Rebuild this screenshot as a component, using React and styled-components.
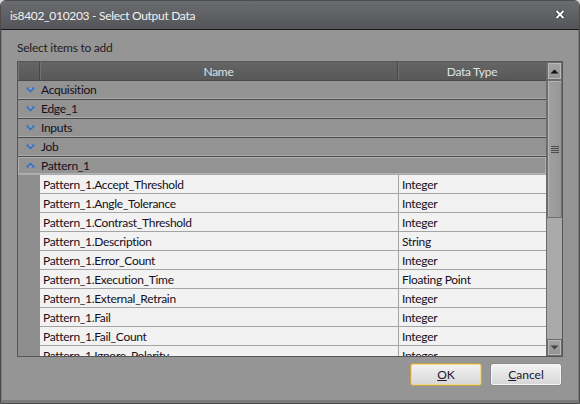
import React from 'react'
import styled, { createGlobalStyle } from 'styled-components'

const GlobalStyle = createGlobalStyle`
  html, body {
    margin: 0;
    background: #d8d8d8;
  }
  body {
    font-family: 'Segoe UI', Lato, 'Open Sans', sans-serif;
  }
`

const Window = styled.div`
  width: 580px;
  height: 404px;
  box-sizing: border-box;
  display: flex;
  flex-direction: column;
  border: 1px solid #4c4c4c;
  border-radius: 6px 6px 0 0;
  overflow: hidden;
  background: #959595;
`

const TitleBar = styled.div`
  height: 28px;
  flex: none;
  display: flex;
  align-items: center;
  justify-content: space-between;
  padding: 0 14px 0 9px;
  background: linear-gradient(#6b6c6f, #545558);
  border-bottom: 1px solid #1a1a1a;
  color: #f2f2f2;
  font-size: 12px;
  letter-spacing: -0.3px;
`

const CloseButton = styled.div`
  display: flex;
  align-items: center;
  margin-top: -1px;
`

const Body = styled.div`
  flex: 1;
  display: flex;
  flex-direction: column;
  padding: 10px 15px 0 15px;
  border-left: 1px solid #7a7a7a;
  border-right: 1px solid #7a7a7a;
  border-bottom: 3px solid #7a7a7a;
`

const Label = styled.div`
  font-size: 12px;
  letter-spacing: -0.25px;
  line-height: 15px;
  height: 15px;
  color: #1e1e1e;
  margin-bottom: 6px;
`

const Table = styled.div`
  width: 546px;
  height: 296px;
  box-sizing: border-box;
  border: 1px solid #565656;
  display: grid;
  grid-template-columns: 1fr 16px;
  background: #8e8e8e;
`

const Content = styled.div`
  overflow: hidden;
  display: flex;
  flex-direction: column;
  font-size: 12px;
  letter-spacing: -0.3px;
`

const HeaderRow = styled.div`
  height: 18px;
  flex: none;
  display: grid;
  grid-template-columns: 22px 358px 1fr;
  background: linear-gradient(#656565, #585858);
  color: #dfe3e6;
`

const HeaderCell = styled.div`
  display: flex;
  align-items: center;
  justify-content: center;
  border-right: 1px solid #474747;
  box-shadow: inset 1px 0 0 #727272;
  &:last-child {
    border-right: none;
  }
`

const GroupRow = styled.div`
  height: 19px;
  flex: none;
  box-sizing: border-box;
  display: flex;
  align-items: center;
  border-top: 1px solid #4a4a4a;
  border-bottom: 1px solid #aaaaaa;
  background: #939393;
  color: #160f1c;
  box-shadow: ${p => (p.$active ? 'inset 0 0 0 1px #b2b2b2' : 'none')};
`

const Chevron = styled.div`
  width: 22px;
  display: flex;
  align-items: center;
  justify-content: center;
  padding-left: 1px;
`

const DataRow = styled.div`
  height: 19px;
  flex: none;
  display: grid;
  grid-template-columns: 22px 358px 1fr;
  color: #160f1c;
`

const Indent = styled.div`
  background: #8e8e8e;
`

const Cell = styled.div`
  box-sizing: border-box;
  background: #f2f2f2;
  border-bottom: 1px solid #a4a4a4;
  border-left: ${p => (p.$divider ? '1px solid #a4a4a4' : 'none')};
  padding-left: 3px;
  display: flex;
  align-items: center;
  white-space: nowrap;
`

const ScrollBar = styled.div`
  display: flex;
  flex-direction: column;
  background: #aaaaaa;
  border-left: 1px solid #6a6a6a;
`

const ScrollButton = styled.div`
  height: ${p => p.$h}px;
  flex: none;
  box-sizing: border-box;
  display: flex;
  align-items: center;
  justify-content: center;
  background: linear-gradient(#a4a4a4, #939393);
  border: 1px solid #6e6e6e;
  box-shadow: inset 0 0 0 1px #b8b8b8;
`

const Thumb = styled.div`
  height: 138px;
  flex: none;
  box-sizing: border-box;
  display: flex;
  align-items: center;
  justify-content: center;
  background: linear-gradient(90deg, #a0a0a0, #979797);
  border: 1px solid #6e6e6e;
  box-shadow: inset 1px 1px 0 #b4b4b4;
`

const Track = styled.div`
  flex: 1;
`

const ButtonBar = styled.div`
  display: flex;
  justify-content: flex-end;
  gap: 8px;
  margin-top: 6px;
  padding-right: 1px;
`

const Button = styled.div`
  width: 72px;
  height: 23px;
  box-sizing: border-box;
  display: flex;
  align-items: center;
  justify-content: center;
  border-radius: 3px;
  border: 1px solid ${p => (p.$default ? '#c9a54a' : '#8b8b8b')};
  box-shadow: ${p => (p.$default ? 'inset 0 0 0 1px #f1d98c' : 'inset 0 0 0 1px #f6f6f6')};
  background: linear-gradient(#f4f4f4, #e4e4e4 50%, #d6d6d6);
  font-size: 12px;
  color: #22152e;
  u {
    text-decoration: underline;
  }
`

const ChevronIcon = ({ up }) => (
  <svg width="9" height="7" viewBox="0 0 9 7">
    <path
      d={up ? 'M1 5.5 L4.5 2 L8 5.5' : 'M1 1.5 L4.5 5 L8 1.5'}
      fill="none"
      stroke="#2f6fc4"
      strokeWidth="2.2"
    />
    <path
      d={up ? 'M2.5 5.2 L4.5 3.2 L6.5 5.2' : 'M2.5 1.8 L4.5 3.8 L6.5 1.8'}
      fill="none"
      stroke="#9cc7f2"
      strokeWidth="0.8"
    />
  </svg>
)

const groups = ['Acquisition', 'Edge_1', 'Inputs', 'Job']

const items = [
  ['Pattern_1.Accept_Threshold', 'Integer'],
  ['Pattern_1.Angle_Tolerance', 'Integer'],
  ['Pattern_1.Contrast_Threshold', 'Integer'],
  ['Pattern_1.Description', 'String'],
  ['Pattern_1.Error_Count', 'Integer'],
  ['Pattern_1.Execution_Time', 'Floating Point'],
  ['Pattern_1.External_Retrain', 'Integer'],
  ['Pattern_1.Fail', 'Integer'],
  ['Pattern_1.Fail_Count', 'Integer'],
  ['Pattern_1.Ignore_Polarity', 'Integer'],
]

const App = () => {
  return (
    <>
      <GlobalStyle />
      <Window>
        <TitleBar>
          <span>is8402_010203 - Select Output Data</span>
          <CloseButton>
            <svg width="10" height="9" viewBox="0 0 10 9">
              <path d="M1.5 1 L8.5 8 M8.5 1 L1.5 8" stroke="#2a2a2a" strokeWidth="3.4" />
              <path d="M1.5 1 L8.5 8 M8.5 1 L1.5 8" stroke="#ffffff" strokeWidth="2" />
            </svg>
          </CloseButton>
        </TitleBar>
        <Body>
          <Label>Select items to add</Label>
          <Table>
            <Content>
              <HeaderRow>
                <HeaderCell />
                <HeaderCell>Name</HeaderCell>
                <HeaderCell>Data Type</HeaderCell>
              </HeaderRow>
              {groups.map(g => (
                <GroupRow key={g}>
                  <Chevron>
                    <ChevronIcon />
                  </Chevron>
                  {g}
                </GroupRow>
              ))}
              <GroupRow $active>
                <Chevron>
                  <ChevronIcon up />
                </Chevron>
                Pattern_1
              </GroupRow>
              {items.map(([name, type]) => (
                <DataRow key={name}>
                  <Indent />
                  <Cell>{name}</Cell>
                  <Cell $divider>{type}</Cell>
                </DataRow>
              ))}
            </Content>
            <ScrollBar>
              <ScrollButton $h={18}>
                <svg width="9" height="5" viewBox="0 0 9 5">
                  <path d="M0.5 4.5 L4.5 0.5 L8.5 4.5 Z" fill="#111" />
                </svg>
              </ScrollButton>
              <Thumb>
                <svg width="8" height="7" viewBox="0 0 8 7">
                  <path d="M0 0.5 H8 M0 2.5 H8 M0 4.5 H8 M0 6.5 H8" stroke="#4a4a4a" strokeWidth="1" />
                </svg>
              </Thumb>
              <Track />
              <ScrollButton $h={17}>
                <svg width="9" height="5" viewBox="0 0 9 5">
                  <path d="M0.5 0.5 L4.5 4.5 L8.5 0.5 Z" fill="#444" />
                </svg>
              </ScrollButton>
            </ScrollBar>
          </Table>
          <ButtonBar>
            <Button $default>
              <span><u>O</u>K</span>
            </Button>
            <Button>
              <span><u>C</u>ancel</span>
            </Button>
          </ButtonBar>
        </Body>
      </Window>
    </>
  )
}

export default App
